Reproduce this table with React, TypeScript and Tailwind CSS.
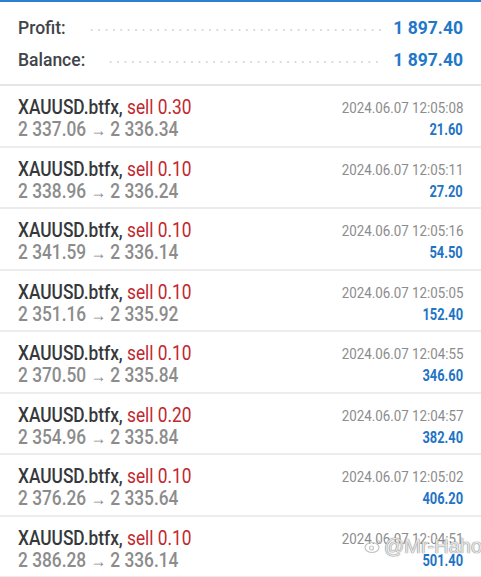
import React from "react";

const rows = [
  ["sell 0.30", "2 337.06", "2 336.34", "2024.06.07 12:05:08", "21.60"],
  ["sell 0.10", "2 338.96", "2 336.24", "2024.06.07 12:05:11", "27.20"],
  ["sell 0.10", "2 341.59", "2 336.14", "2024.06.07 12:05:16", "54.50"],
  ["sell 0.10", "2 351.16", "2 335.92", "2024.06.07 12:05:05", "152.40"],
  ["sell 0.10", "2 370.50", "2 335.84", "2024.06.07 12:04:55", "346.60"],
  ["sell 0.20", "2 354.96", "2 335.84", "2024.06.07 12:04:57", "382.40"],
  ["sell 0.10", "2 376.26", "2 335.64", "2024.06.07 12:05:02", "406.20"],
  ["sell 0.10", "2 386.28", "2 336.14", "2024.06.07 12:04:51", "501.40"],
];

export default function App() {
  return (
    <div className="relative w-[481px] h-[577px] overflow-hidden bg-white" style={{ fontFamily: "Roboto, 'Liberation Sans', sans-serif" }}>
      <div className="h-[2px] bg-[#2d7fd1]" />
      <div className="h-[84px] border-b-[2px] border-[#e6e6e6] pl-[18px] pr-[18px] pt-[15px] flex flex-col gap-[10px]">
        {[
          ["Profit:", "1 897.40"],
          ["Balance:", "1 897.40"],
        ].map(([l, v]) => (
          <div key={l} className="flex items-center h-[22px]">
            <span className="text-[17.5px] font-medium text-[#404448]">{l}</span>
            <div className="flex-1 ml-[22px] mr-[10px] mt-[4px] h-[4px] bg-[radial-gradient(circle,#dadada_1px,transparent_1.3px)] bg-[length:7.4px_4px]" />
            <span className="text-[17.5px] font-bold text-[#1f78c8]">{v}</span>
          </div>
        ))}
      </div>
      {rows.map((r, i) => (
        <div key={i} className="h-[61.5px] border-b-[2px] border-[#ececec] pl-[18px] pr-[18px] flex justify-between">
          <div className="flex flex-col pt-[10px] leading-[22px] origin-left scale-x-[0.865] whitespace-nowrap">
            <div className="text-[20px]">
              <span className="font-medium text-[#36383b]">XAUUSD.btfx, </span>
              <span className="text-[#c1272d]">{r[0]}</span>
            </div>
            <div className="text-[20px] text-[#8c8c8c] font-medium">
              {r[1]} <span className="text-[18px]">→</span> {r[2]}
            </div>
          </div>
          <div className="flex flex-col items-end pt-[13px] whitespace-nowrap">
            <div className="text-[15.5px] leading-[19px] text-[#8c8c8c] origin-right scale-x-[0.86]">{r[3]}</div>
            <div className="text-[16.5px] leading-[23px] font-bold text-[#1f74c4] origin-right scale-x-[0.78]">{r[4]}</div>
          </div>
        </div>
      ))}
      <div className="absolute left-[364px] top-[531px] flex items-center gap-[2px] whitespace-nowrap text-[20px] text-white/80 [text-shadow:0_0_1px_#777,0_0_1px_#777]" style={{ fontFamily: "'Liberation Sans', sans-serif" }}>
        <svg width="18" height="16" viewBox="0 0 18 16" fill="none" stroke="#c4c4c4" strokeWidth="1.2">
          <ellipse cx="8" cy="9.5" rx="7" ry="5" />
          <circle cx="7.5" cy="10" r="2" />
          <path d="M13 2.5a3 3 0 0 1 3 3" />
        </svg>
        <span>@Mr-Haho</span>
      </div>
    </div>
  );
}
